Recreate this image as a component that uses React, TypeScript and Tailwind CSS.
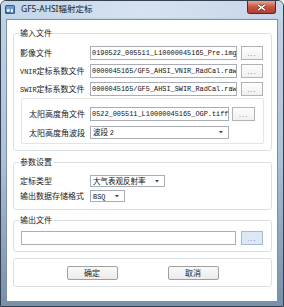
import React from 'react';

const cjk = { fontFamily: '"Noto Sans CJK SC", "Noto Sans", sans-serif' };
const mono = { fontFamily: '"Liberation Mono", "Noto Sans CJK SC", monospace' };

function TextBox({ value, className = '' }: { value?: string; className?: string }) {
  return (
    <div
      className={`h-full border border-[#a9adb5] bg-white flex items-center overflow-hidden whitespace-nowrap pl-[1px] text-[6.9px] text-[#111] ${className}`}
      style={mono}
    >
      {value}
    </div>
  );
}

function Combo({ children, className = '' }: { children: React.ReactNode; className?: string }) {
  return (
    <div className={`h-full border border-[#a9adb5] bg-white flex items-center justify-between pl-[2px] pr-[5px] text-[7.5px] text-[#111] ${className}`}>
      <span className="leading-none whitespace-nowrap">{children}</span>
      <svg width="4" height="3" viewBox="0 0 4 3">
        <path d="M0 0 L4 0 L2 2.5 Z" fill="#444" />
      </svg>
    </div>
  );
}

function Browse({ active = false, className = '' }: { active?: boolean; className?: string }) {
  return (
    <div
      className={`h-full flex items-center justify-center text-[7px] leading-none tracking-[1px] ${
        active
          ? 'border border-[#9fb9d8] bg-[#dce8f6] text-[#7d93ad]'
          : 'border border-[#b3b3b3] bg-gradient-to-b from-[#fdfdfd] to-[#f0f0f0] text-[#8a8a8a]'
      } ${className}`}
    >
      ...
    </div>
  );
}

function Group({ title, children, className = '' }: { title?: string; children: React.ReactNode; className?: string }) {
  return (
    <fieldset className={`min-w-0 border border-[#d9e0e6] rounded-[3px] px-[6px] ${className}`}>
      {title && <legend className="-ml-[1px] px-[1px] text-[8px] leading-[10px] text-[#1a1a1a]">{title}</legend>}
      {children}
    </fieldset>
  );
}

export default function App() {
  return (
    <div
      className="w-[284px] h-[307px] flex flex-col border border-[#34404d] rounded-t-[6px] overflow-hidden bg-gradient-to-b from-[#c3d4e7] via-[#aec2d8] to-[#7890aa]"
      style={cjk}
    >
      {/* title bar */}
      <div className="h-[17px] flex items-center bg-gradient-to-r from-[#c3d5e9] via-[#d6e2ef] to-[#c6d7ea]">
        <svg className="ml-[4px]" width="10" height="9" viewBox="0 0 10 9">
          <rect x="0" y="0" width="10" height="9" rx="1.5" fill="#2f5f9e" />
          <rect x="1" y="1" width="8" height="3" fill="#6f9ad0" />
          <circle cx="3.2" cy="5.5" r="1.8" fill="#e8eef6" />
          <rect x="5.6" y="4" width="2.6" height="3.5" fill="#e8eef6" />
        </svg>
        <span className="ml-[6px] text-[8.5px] leading-none text-[#15212e]" style={{ fontFamily: '"Noto Sans", "Noto Sans CJK SC", sans-serif' }}>
          GF5-AHSI辐射定标
        </span>
        <div className="ml-auto mr-[7px] self-start w-[29px] h-[13px] flex items-center justify-center rounded-b-[3px] border border-t-0 border-[#5c2620] bg-gradient-to-b from-[#e7a595] via-[#c9523f] to-[#b5402f]">
          <svg width="9" height="7" viewBox="0 0 9 7">
            <path d="M1 0.8 L8 6.2 M8 0.8 L1 6.2" stroke="#4a1a14" strokeWidth="2.6" />
            <path d="M1 0.8 L8 6.2 M8 0.8 L1 6.2" stroke="#ffffff" strokeWidth="1.5" />
          </svg>
        </div>
      </div>

      {/* client area */}
      <div className="flex-1 mx-[5px] mb-[4px] mt-[1px] bg-white border border-[#7d91a7] flex flex-col pl-[6px] pr-[5px] pt-[8px] text-[8px] text-[#1a1a1a]">
        <Group title="输入文件" className="pt-[8px] pb-[6px]">
          <div className="flex flex-col gap-[4px]">
            <div className="flex items-center h-[14px]">
              <span className="w-[70px] shrink-0">影像文件</span>
              <TextBox value="0190522_005511_L10000045165_Pre.img" className="w-[147px]" />
              <Browse className="w-[22px] ml-[4px]" />
            </div>
            <div className="flex items-center h-[14px]">
              <span className="w-[70px] shrink-0 whitespace-nowrap">
                <span className="text-[6.9px]" style={mono}>VNIR</span>定标系数文件
              </span>
              <TextBox value="0000045165/GF5_AHSI_VNIR_RadCal.raw" className="w-[147px]" />
              <Browse className="w-[22px] ml-[4px]" />
            </div>
            <div className="flex items-center h-[14px]">
              <span className="w-[70px] shrink-0 whitespace-nowrap">
                <span className="text-[6.9px]" style={mono}>SWIR</span>定标系数文件
              </span>
              <TextBox value="0000045165/GF5_AHSI_SWIR_RadCal.raw" className="w-[147px]" />
              <Browse className="w-[22px] ml-[4px]" />
            </div>
          </div>

          <div className="mt-[2px] mx-[1px] border border-[#e4e4e4] rounded-[2px] pt-[8px] pb-[4px] pl-[7px] pr-[6px]">
            <div className="flex items-center h-[14px]">
              <span className="w-[61px] shrink-0">太阳高度角文件</span>
              <TextBox value="0522_005511_L10000045165_OGP.tiff" className="w-[139px] h-[13px]" />
              <Browse className="w-[23px] ml-[3px] h-[15px]" />
            </div>
            <div className="flex items-center h-[13px] mt-[5px]">
              <span className="w-[61px] shrink-0">太阳高度角波段</span>
              <Combo className="w-[139px]">
                波段 <span className="text-[6.9px]" style={mono}>2</span>
              </Combo>
            </div>
          </div>
        </Group>

        <Group title="参数设置" className="mt-[6px] pt-[8px] pb-[7px]">
          <div className="flex items-center h-[12px]">
            <span className="w-[70px] shrink-0">定标类型</span>
            <Combo className="w-[75px]">大气表观反射率</Combo>
          </div>
          <div className="flex items-center h-[12px] mt-[3px]">
            <span className="w-[70px] shrink-0 whitespace-nowrap">输出数据存储格式</span>
            <Combo className="w-[35px]">
              <span className="text-[6.9px]" style={mono}>BSQ</span>
            </Combo>
          </div>
        </Group>

        <Group title="输出文件" className="mt-[5px] pt-[6px] pb-[6px]">
          <div className="flex items-center h-[14px]">
            <TextBox className="w-[215px] ml-[1px]" />
            <Browse active className="w-[22px] ml-[5px]" />
          </div>
        </Group>

        <Group className="mt-[6px] pt-[7px] pb-[6px]">
          <div className="flex justify-center gap-[50px]">
            <button className="w-[51px] h-[14px] border border-[#a0a0a0] rounded-[2px] bg-gradient-to-b from-[#fafafa] to-[#ebebeb] text-[8px] leading-none">
              确定
            </button>
            <button className="w-[51px] h-[14px] border border-[#a0a0a0] rounded-[2px] bg-gradient-to-b from-[#fafafa] to-[#ebebeb] text-[8px] leading-none">
              取消
            </button>
          </div>
        </Group>
      </div>
    </div>
  );
}
